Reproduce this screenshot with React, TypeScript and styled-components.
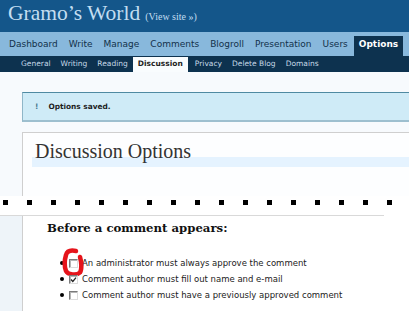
import React from "react";
import styled, { createGlobalStyle } from "styled-components";

const Global = createGlobalStyle`
  html, body { margin: 0; padding: 0; }
  body {
    background: #f7fafd;
    font-family: "DejaVu Sans", Verdana, sans-serif;
    overflow: hidden;
  }
`;

const Page = styled.div`
  width: 409px;
  height: 311px;
  overflow: hidden;
  background: #f7fafd;
`;

const Header = styled.header`
  box-sizing: border-box;
  height: 32px;
  padding: 1px 8px 0;
  background: #14568a;
  display: flex;
  align-items: baseline;
  gap: 5px;
`;

const SiteTitle = styled.h1`
  margin: 0;
  font-family: "Liberation Serif", "Times New Roman", serif;
  font-weight: normal;
  font-size: 21.5px;
  line-height: 24px;
  color: #c3def1;
`;

const ViewSite = styled.a`
  font-family: "Liberation Serif", "Times New Roman", serif;
  font-size: 10px;
  color: #c3def1;
  text-decoration: none;
`;

const MainNav = styled.nav`
  box-sizing: border-box;
  height: 24px;
  padding-left: 4px;
  background: #88b8dc;
  display: flex;
  align-items: flex-end;
`;

const MainTab = styled.a<{ $active?: boolean }>`
  box-sizing: border-box;
  height: 20px;
  padding: 1px 5px 0;
  margin-right: 1px;
  line-height: 15px;
  font-size: 9px;
  text-decoration: none;
  white-space: nowrap;
  color: ${(p) => (p.$active ? "#ffffff" : "#12314a")};
  background: ${(p) => (p.$active ? "#0d324f" : "transparent")};
  font-weight: ${(p) => (p.$active ? "bold" : "normal")};
`;

const SubNav = styled.nav`
  box-sizing: border-box;
  height: 16px;
  padding-left: 16px;
  background: #0d324f;
  display: flex;
  align-items: flex-end;
`;

const SubTab = styled.a<{ $active?: boolean }>`
  box-sizing: border-box;
  height: 15px;
  padding: 0 5px;
  margin-right: ${(p) => (p.$active ? "2px" : "0")};
  line-height: 14px;
  font-size: 7.5px;
  text-decoration: none;
  white-space: nowrap;
  color: ${(p) => (p.$active ? "#222" : "#c6d9e8")};
  background: ${(p) => (p.$active ? "#f9fcfe" : "transparent")};
  font-weight: ${(p) => (p.$active ? "bold" : "normal")};
`;

const Content = styled.main`
  padding-top: 20px;
`;

const Message = styled.div`
  box-sizing: border-box;
  margin-left: 22px;
  height: 30px;
  padding-left: 12px;
  background: #cfebf7;
  border-top: 1px solid #4f8aa2;
  border-left: 1px solid #8fb6c8;
  border-bottom: 2px solid #9dbfcf;
  display: flex;
  align-items: center;
  gap: 10px;
  font-size: 7.4px;
  font-weight: bold;
  color: #1d1d1d;
`;

const Bang = styled.span`
  color: #4b7a90;
`;

const Wrap = styled.section`
  box-sizing: border-box;
  margin: 10px 0 0 22px;
  height: 64px;
  background: #fdfeff;
  border-top: 1px solid #cfcfcf;
  border-left: 1px solid #cfcfcf;
  padding-top: 12px;
`;

const Title = styled.h2`
  margin: 0 0 0 9px;
  padding-left: 3px;
  font-family: "Liberation Serif", Georgia, serif;
  font-weight: normal;
  font-size: 20px;
  line-height: 12px;
  color: #333;
  border-bottom: 10px solid #e5f3ff;
`;

const Cut = styled.div`
  box-sizing: border-box;
  height: 19px;
  padding: 4px 0 0 3px;
  background: #ffffff;
  display: flex;
  gap: 19px;
  overflow: hidden;
`;

const Dot = styled.span`
  flex: none;
  width: 5px;
  height: 5px;
  background: #000;
`;

const Lower = styled.section`
  background: #ffffff;
`;

const CutEdge = styled.div`
  width: 384px;
  height: 1px;
  background: #d9d9d9;
`;

const LowerBody = styled.div`
  display: flex;
  height: 100px;
`;

const Strip = styled.div`
  width: 22px;
  background: #eef4f9;
`;

const Wrap2 = styled.div`
  flex: 1;
  border-left: 1px solid #cfcfcf;
  background: #ffffff;
  padding-top: 5px;
`;

const SubHead = styled.h3`
  margin: 0 0 0 24px;
  font-family: "DejaVu Serif", Georgia, serif;
  font-weight: bold;
  font-size: 11.7px;
  line-height: 14px;
  color: #111;
`;

const List = styled.ul`
  list-style: none;
  margin: 20px 0 0 0;
  padding: 0 0 0 37px;
`;

const Item = styled.li`
  position: relative;
  height: 16px;
  display: flex;
  align-items: center;
  font-size: 8.5px;
  color: #222;
  white-space: nowrap;
`;

const Bullet = styled.span`
  flex: none;
  width: 4px;
  height: 4px;
  border-radius: 50%;
  background: #000;
  margin-right: 5px;
`;

const Box = styled.span`
  box-sizing: border-box;
  flex: none;
  width: 9px;
  height: 9px;
  margin-right: 4px;
  background: #fff;
  border: 1px solid;
  border-color: #7a7a7a #dcdcdc #dcdcdc #7a7a7a;
  box-shadow: inset 1px 1px 0 #b5b5b5;
  display: flex;
  align-items: center;
  justify-content: center;
`;

const Mark = styled.svg`
  position: absolute;
  left: 2px;
  top: -7px;
  overflow: visible;
  pointer-events: none;
`;

const Check = () => (
  <svg width="7" height="7" viewBox="0 0 7 7">
    <path d="M1 3.5 L2.8 5.4 L6 1.6" fill="none" stroke="#222" strokeWidth="1.3" />
  </svg>
);

const mainTabs = ["Dashboard", "Write", "Manage", "Comments", "Blogroll", "Presentation", "Users", "Options"];
const subTabs = ["General", "Writing", "Reading", "Discussion", "Privacy", "Delete Blog", "Domains"];
const options = [
  { label: "An administrator must always approve the comment", checked: false, marked: true },
  { label: "Comment author must fill out name and e-mail", checked: true, marked: false },
  { label: "Comment author must have a previously approved comment", checked: false, marked: false },
];

export default function App() {
  return (
    <Page>
      <Global />
      <Header>
        <SiteTitle>Gramo’s World</SiteTitle>
        <ViewSite href="#">(View site »)</ViewSite>
      </Header>
      <MainNav>
        {mainTabs.map((t) => (
          <MainTab key={t} href="#" $active={t === "Options"}>
            {t}
          </MainTab>
        ))}
      </MainNav>
      <SubNav>
        {subTabs.map((t) => (
          <SubTab key={t} href="#" $active={t === "Discussion"}>
            {t}
          </SubTab>
        ))}
      </SubNav>
      <Content>
        <Message>
          <Bang>!</Bang>
          <span>Options saved.</span>
        </Message>
        <Wrap>
          <Title>Discussion Options</Title>
        </Wrap>
      </Content>
      <Cut>
        {Array.from({ length: 17 }).map((_, i) => (
          <Dot key={i} />
        ))}
      </Cut>
      <Lower>
        <CutEdge />
        <LowerBody>
          <Strip />
          <Wrap2>
            <SubHead>Before a comment appears:</SubHead>
            <List>
              {options.map((o) => (
                <Item key={o.label}>
                  <Bullet />
                  <Box>{o.checked && <Check />}</Box>
                  {o.label}
                  {o.marked && (
                    <Mark width="22" height="29" viewBox="0 0 22 29">
                      <path
                        d="M14 3 C9 2, 5 3, 4 7 C2.5 12, 2.5 19, 4 23 C6 27, 15 27.5, 18 24.5 C20 21.5, 19.5 14, 18 9"
                        fill="none"
                        stroke="#e5141b"
                        strokeWidth="4.5"
                        strokeLinecap="round"
                      />
                    </Mark>
                  )}
                </Item>
              ))}
            </List>
          </Wrap2>
        </LowerBody>
      </Lower>
    </Page>
  );
}
